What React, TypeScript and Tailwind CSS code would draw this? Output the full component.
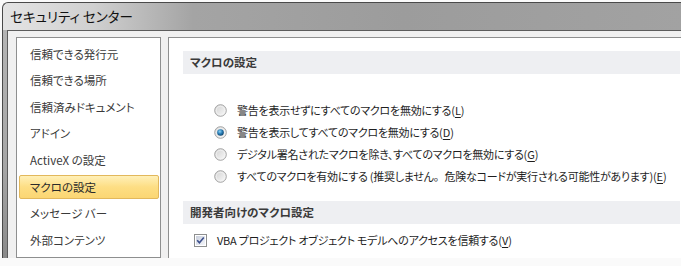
import React from "react";

const Radio = ({ checked }: { checked?: boolean }) => (
  <svg width="13" height="13" viewBox="0 0 13 13" className="shrink-0">
    <defs>
      <linearGradient id={checked ? "rgc" : "rgu"} x1="0" y1="0" x2="1" y2="1">
        <stop offset="0" stopColor="#d0d0d0" />
        <stop offset="1" stopColor="#fbfbfb" />
      </linearGradient>
      <radialGradient id="dot" cx="0.4" cy="0.35" r="0.7">
        <stop offset="0" stopColor="#8fd3f5" />
        <stop offset="0.5" stopColor="#2a7fb8" />
        <stop offset="1" stopColor="#0d3f66" />
      </radialGradient>
    </defs>
    <circle cx="6.5" cy="6.5" r="5.8" fill={`url(#${checked ? "rgc" : "rgu"})`} stroke="#9a9a9a" strokeWidth="0.9" />
    <circle cx="6.5" cy="6.5" r="4.3" fill="none" stroke="#f4f4f4" strokeWidth="0.8" />
    {checked && <circle cx="6.5" cy="6.5" r="3.3" fill="url(#dot)" />}
  </svg>
);

const Check = () => (
  <svg width="13" height="13" viewBox="0 0 13 13" className="shrink-0">
    <defs>
      <linearGradient id="cbg" x1="0" y1="0" x2="1" y2="1">
        <stop offset="0" stopColor="#c9cfdc" />
        <stop offset="1" stopColor="#f4f6fa" />
      </linearGradient>
    </defs>
    <rect x="0.5" y="0.5" width="12" height="12" fill="#fff" stroke="#8e8f8f" />
    <rect x="2" y="2" width="9" height="9" fill="url(#cbg)" />
    <path d="M3.2 6.3 L5.4 8.8 L9.8 3.4" fill="none" stroke="#3d4f8c" strokeWidth="1.6" />
  </svg>
);

const Key = ({ k }: { k: string }) => (
  <span className="tracking-normal">
    (<span className="underline underline-offset-2">{k}</span>)
  </span>
);

const navItems = [
  "信頼できる発行元",
  "信頼できる場所",
  "信頼済みドキュメント",
  "アドイン",
  "ActiveX の設定",
  "マクロの設定",
  "メッセージ バー",
  "外部コンテンツ",
];

const radios: { text: React.ReactNode; k: string; checked?: boolean }[] = [
  { text: "警告を表示せずにすべてのマクロを無効にする", k: "L" },
  { text: "警告を表示してすべてのマクロを無効にする", k: "D", checked: true },
  { text: "デジタル署名されたマクロを除き、すべてのマクロを無効にする", k: "G" },
  {
    text: (
      <>
        すべてのマクロを有効にする (推奨しません
        <span className="[font-feature-settings:normal]">。</span>
        危険なコードが実行される可能性があります)
      </>
    ),
    k: "E",
  },
];

export default function App() {
  return (
    <div className="w-[681px] h-[266px] overflow-hidden bg-[#fafafa] pt-[2px] pl-[2px] font-['Noto_Sans_CJK_JP','Noto_Sans',sans-serif] [font-feature-settings:'palt']">
      <div className="flex flex-col h-[256px] border-l border-t border-[#4a4a4a] rounded-tl-[6px] bg-[linear-gradient(to_right,#e4e4e4_0px,#d0d0d0_90px,#a4a4a4_190px,#9c9c9c_400px,#a2a2a2_681px)] overflow-hidden">
        <div className="h-[27px] flex items-center pl-[7px] text-[13.5px] text-[#111] leading-none">
          セキュリティ センター
        </div>
        <div className="flex flex-1">
          <div className="w-[4px] bg-[linear-gradient(to_bottom,#b4b4b4,#a6a6a6_60%,#8a8a8a)]" />
          <div className="flex-1 flex flex-col border-l border-t border-[#5c5c5c] bg-[#f0f0f0]">
            <div className="flex flex-1 pt-[6px] pl-[8px]">
              {/* left nav */}
              <div className="w-[145px] border border-[#8e8f8f] bg-white pt-[3px] pb-[2px] text-[11.5px] text-[#3a3a3a]">
                {navItems.map((t) =>
                  t === "マクロの設定" ? (
                    <div key={t} className="h-[26.6px] flex items-center pl-[2px] pr-[1px]">
                      <div className="h-[24px] w-full flex items-center pl-[10px] rounded-[2px] border border-[#e2b85c] bg-[linear-gradient(to_bottom,#fff0b8,#fdde84_50%,#fbd673)] text-[#2a2a2a]">
                        {t}
                      </div>
                    </div>
                  ) : (
                    <div key={t} className="h-[26.6px] flex items-center pl-[13px]">
                      {t}
                    </div>
                  )
                )}
              </div>
              {/* right panel */}
              <div className="ml-[7px] flex-1 border-l border-t border-[#8e8f8f] bg-white pt-[13px] pl-[14px] text-[11px] tracking-[-0.25px] text-[#1e1e1e]">
                <div className="w-[497px] h-[23px] bg-[#eeeff2] flex items-center pl-[7px] font-bold text-[11.5px] tracking-normal text-[#3a3a3a]">
                  マクロの設定
                </div>
                <div className="mt-[25px] flex flex-col">
                  {radios.map((r) => (
                    <div key={r.k} className="h-[22px] flex items-center pl-[31px] gap-[10px]">
                      <Radio checked={r.checked} />
                      <span className="whitespace-nowrap">
                        {r.text}
                        <Key k={r.k} />
                      </span>
                    </div>
                  ))}
                </div>
                <div className="mt-[14px] w-[497px] h-[23px] bg-[#eeeff2] flex items-center pl-[7px] font-bold text-[11.5px] tracking-normal text-[#3a3a3a]">
                  開発者向けのマクロ設定
                </div>
                <div className="mt-[5px] h-[22px] flex items-center pl-[11px] gap-[10px]">
                  <Check />
                  <span className="whitespace-nowrap">
                    VBA プロジェクト オブジェクト モデルへのアクセスを信頼する
                    <Key k="V" />
                  </span>
                </div>
              </div>
            </div>
          </div>
        </div>
      </div>
    </div>
  );
}
